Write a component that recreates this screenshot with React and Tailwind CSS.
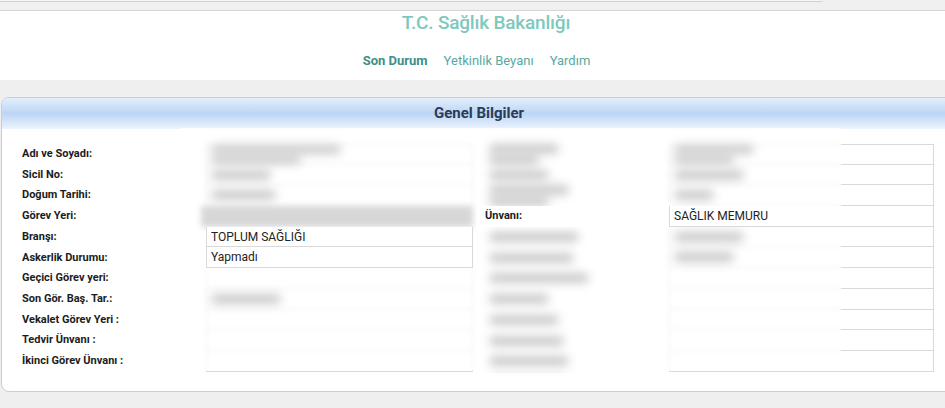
import React from "react";

const rows = [
  { label: "Adı ve Soyadı:", left: [130, 90], mid: [70, 50], right: [80, 60] },
  { label: "Sicil No:", left: [60], mid: [60], right: [70] },
  { label: "Doğum Tarihi:", left: [65], mid: [80, 60], right: [40] },
  { label: "Görev Yeri:", gorev: true },
  { label: "Branşı:", value: "TOPLUM SAĞLIĞI", mid: [90], right: [70] },
  { label: "Askerlik Durumu:", value: "Yapmadı", mid: [85], right: [60] },
  { label: "Geçici Görev yeri:", mid: [100] },
  { label: "Son Gör. Baş. Tar.:", left: [70], mid: [60] },
  { label: "Vekalet Görev Yeri :", mid: [70] },
  { label: "Tedvir Ünvanı :", mid: [75] },
  { label: "İkinci Görev Ünvanı :", mid: [80] },
];

function Blobs({ widths }) {
  if (!widths) return null;
  return (
    <div className="flex flex-col justify-center gap-[1px] h-full pl-[4px]">
      {widths.map((w, i) => (
        <div
          key={i}
          className="h-[10px] rounded-full bg-[#7a7a7a] blur-[4px]"
          style={{ width: w }}
        />
      ))}
    </div>
  );
}

function Row({ row, first }) {
  const box = `h-full border-x border-b border-[#d9d9d9] ${first ? "border-t" : ""}`;
  return (
    <div className="flex h-[20.7px] items-stretch">
      <div className="w-[184px] flex items-center text-[11px] font-bold text-[#1c1c1c]">
        {row.label}
      </div>
      {row.gorev ? (
        <div className="w-[272px] -ml-[5px] h-full bg-[#9c9c9c] blur-[2px]" />
      ) : row.value ? (
        <div className={`w-[267px] relative z-20 bg-white flex items-center pl-[4px] text-[12px] text-[#222] ${box}`}>
          {row.value}
        </div>
      ) : (
        <div className={`w-[267px] ${box}`}>
          <Blobs widths={row.left} />
        </div>
      )}
      <div className="w-[196px] pl-[12px]">
        {row.gorev ? (
          <div className="relative z-20 h-full -ml-[8px] pl-[8px] bg-white flex items-center text-[11px] font-bold text-[#1c1c1c]">
            Ünvanı:
          </div>
        ) : (
          <Blobs widths={row.mid} />
        )}
      </div>
      {row.gorev ? (
        <div className={`w-[265px] relative z-20 bg-white flex items-center pl-[4px] text-[12px] text-[#222] ${box}`}>
          SAĞLIK MEMURU
        </div>
      ) : (
        <div className={`w-[265px] ${box}`}>
          <Blobs widths={row.right} />
        </div>
      )}
    </div>
  );
}

export default function App() {
  return (
    <div className="w-full h-[408px] overflow-hidden bg-[#efefef] font-['Roboto',sans-serif]">
      <div className="h-[11px] border-b border-[#d6d6d6] bg-[#f0f0f0]">
        <div className="w-[823px] h-[2px] bg-[#f7f7f7] border-b border-[#cfcfcf] rounded-br-sm" />
      </div>

      <header className="h-[69px] bg-white flex flex-col items-center">
        <div className="mt-[2px] pl-[27px] leading-none text-[19px] font-medium tracking-[-0.2px] text-[#7ec8be]">
          T.C. Sağlık Bakanlığı
        </div>
        <nav className="mt-[22px] pl-[8px] leading-none flex gap-[16px] text-[13px]">
          <span className="font-bold text-[#3e8f88]">Son Durum</span>
          <span className="text-[#58a9a0]">Yetkinlik Beyanı</span>
          <span className="text-[#58a9a0]">Yardım</span>
        </nav>
      </header>

      <div className="h-[17px]" />

      <section className="relative ml-[1px] -mr-[12px] h-[295px] rounded-l-[8px] border border-[#bcd0e6] bg-white overflow-hidden">
        <div className="h-[31px] flex items-center justify-center bg-gradient-to-b from-[#e4eefb] via-[#bcd5f5] to-[#edf4fd] text-[15px] font-bold text-[#2b3b55]">
          Genel Bilgiler
        </div>

        <div className="pt-[15px] pl-[20px]">
          {rows.map((row, i) => (
            <Row key={i} row={row} first={i === 0} />
          ))}
        </div>

        {/* blurred privacy mask over most of the form */}
        <div className="absolute z-10 left-[178px] top-[30px] w-[661px] h-[243px] bg-white/60 backdrop-blur-[2px]" />
      </section>
    </div>
  );
}
